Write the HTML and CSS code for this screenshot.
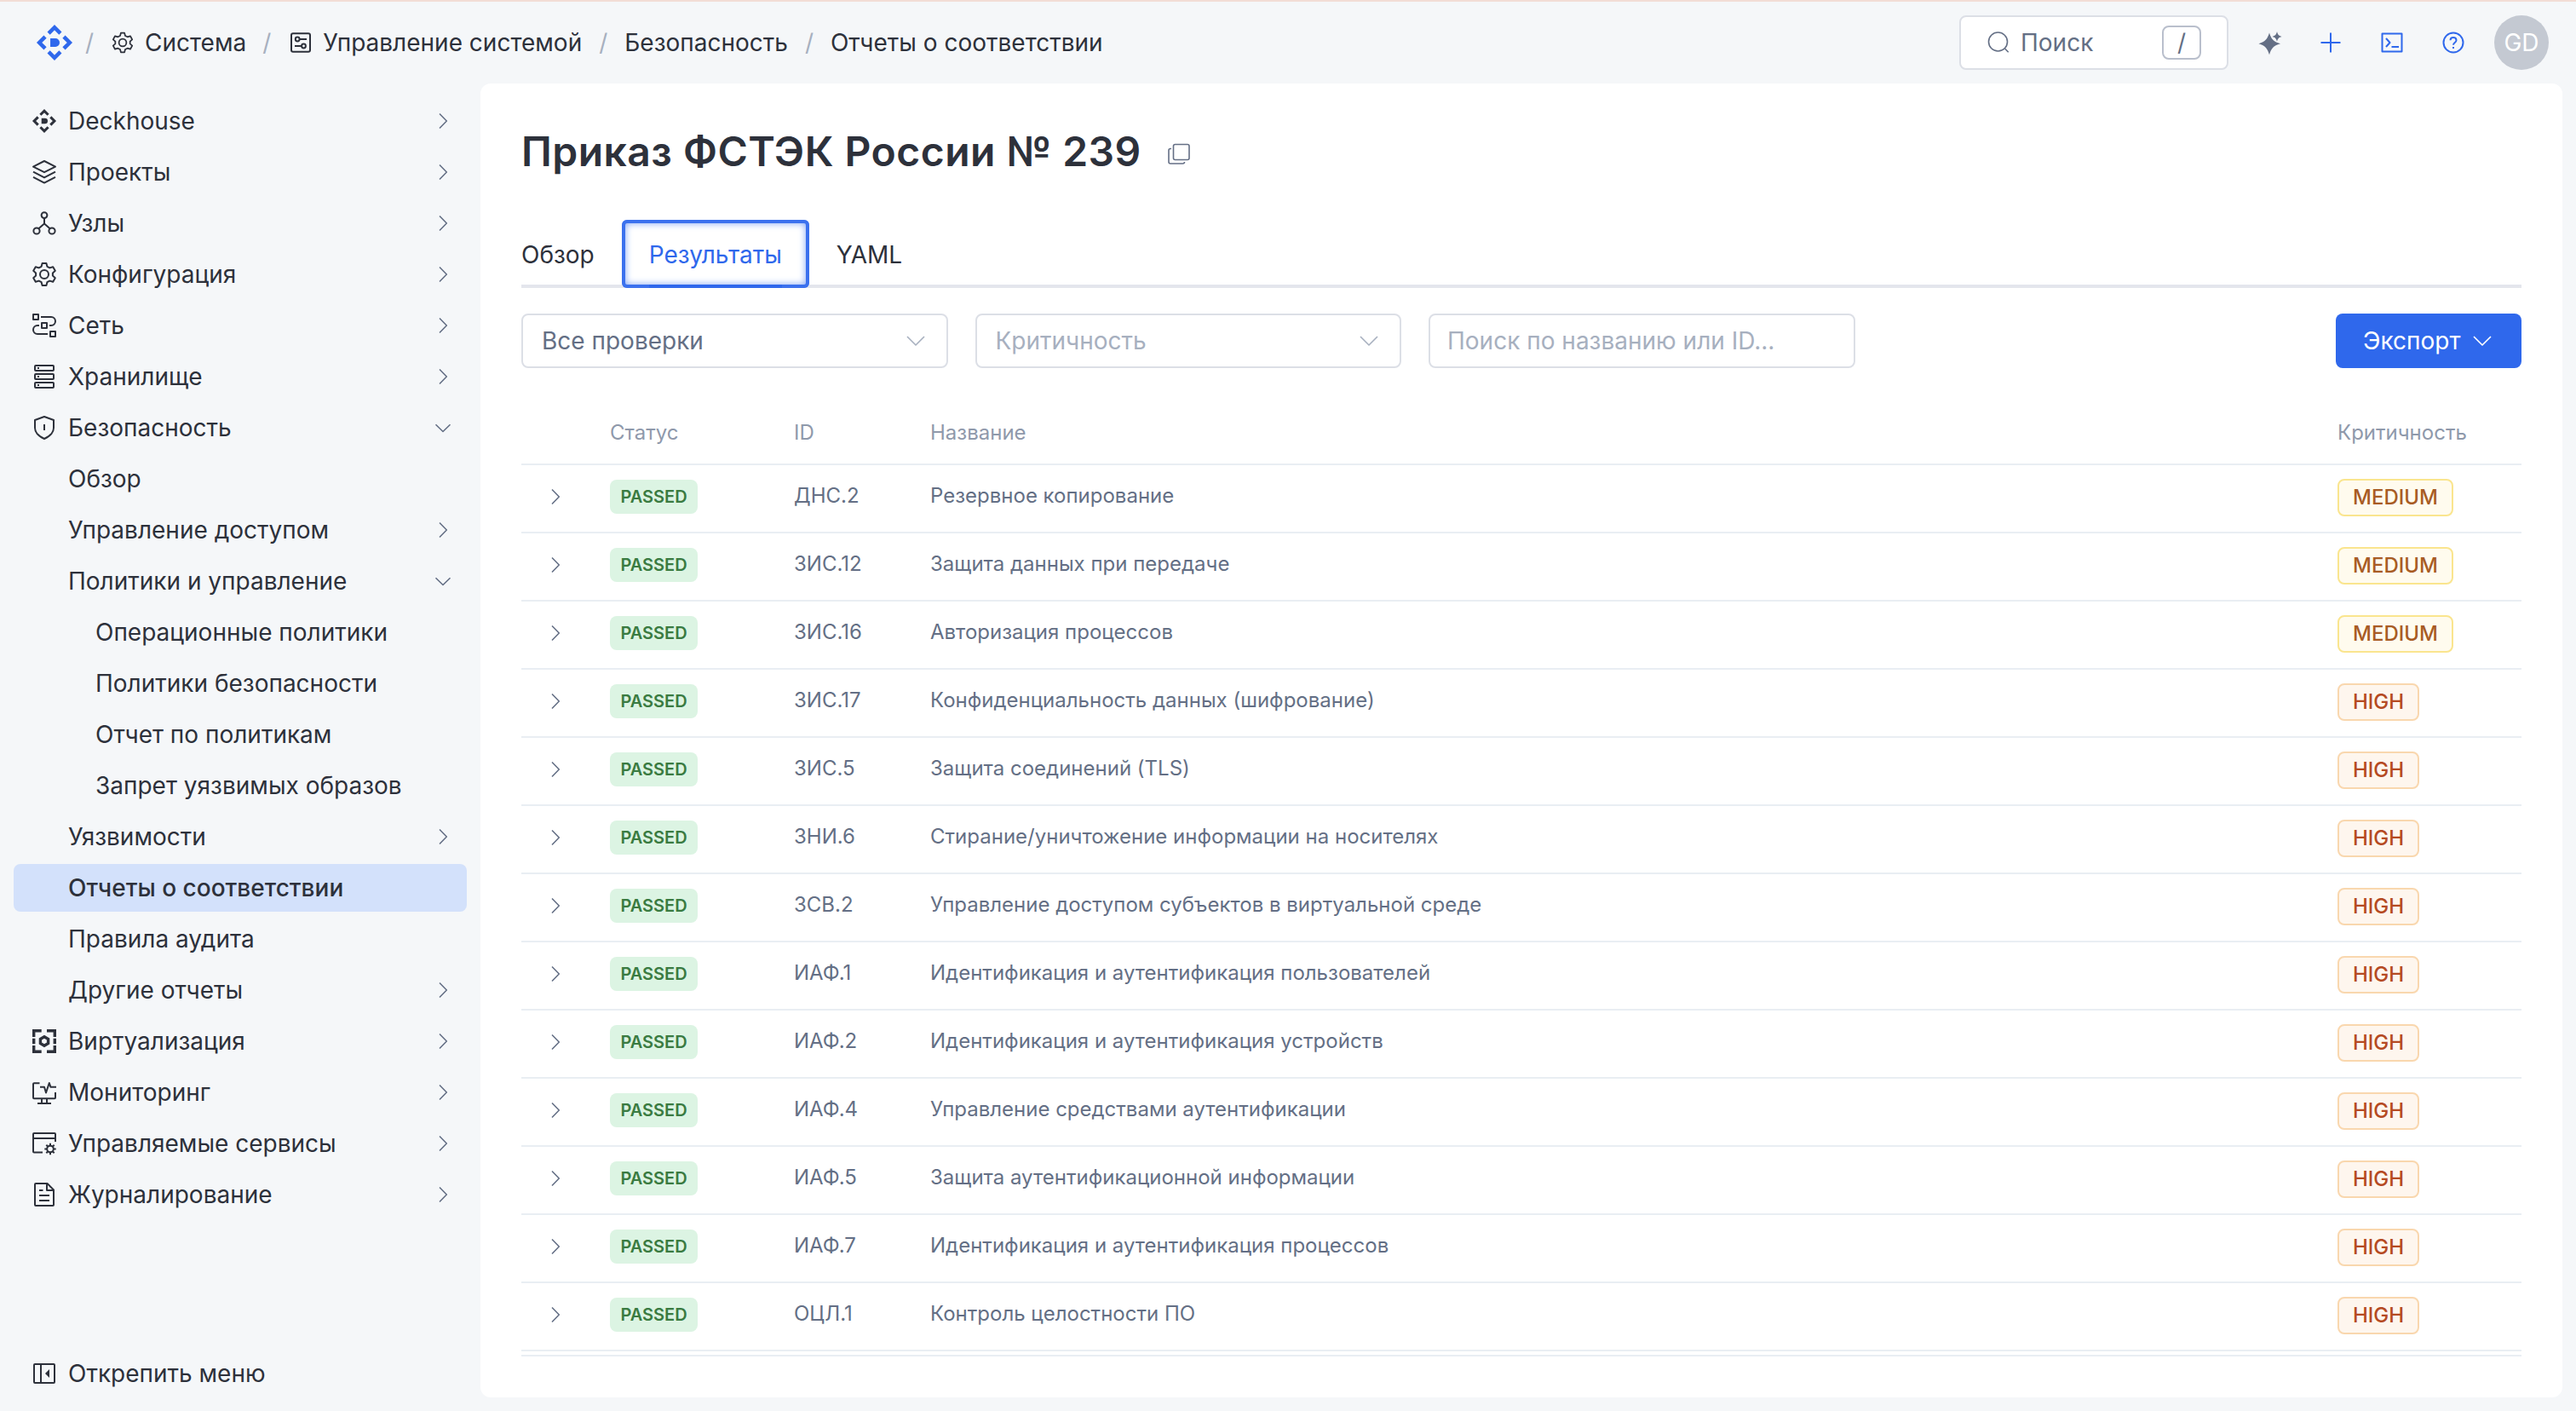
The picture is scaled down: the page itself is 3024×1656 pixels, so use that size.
FILE: index.html
```
<!DOCTYPE html>
<html lang="ru">
  <head>
    <meta charset="UTF-8" />
    <title>Приказ ФСТЭК России № 239</title>
    <link rel="stylesheet" href="styles.css">
  </head>
  <body>
    <svg class="sprite">
      <symbol id="i-deckhouse" viewBox="0 0 32 32">
        <g fill="none" stroke="currentColor" stroke-width="3" stroke-linejoin="miter">
          <path d="M11.4 8.7 16 4.1l4.600 4.600M11.400 23.300l4.600 4.600 4.600-4.600M8.700 11.400 4.100 16l4.600 4.600M23.300 11.400l4.600 4.600-4.600 4.600" />
        </g>
        <path fill="currentColor" stroke="none" d="M12.700 12.700h4a3.300 3.300 0 0 1 0 6.600h-4z" />
      </symbol>
      <symbol id="i-layers" viewBox="0 0 32 32">
        <path d="M16 3l13 6.600-13 6.600L3 9.600zM3 15.600l13 6.800 13-6.800M3 21.800l13 6.800 13-6.800" />
      </symbol>
      <symbol id="i-nodes" viewBox="0 0 32 32">
        <circle cx="16" cy="6.600" r="3.400" /><circle cx="7" cy="25" r="3.600" /><circle cx="25" cy="25" r="3.600" />
        <path d="M16 10v6.500L9.400 22.300M16 16.500l6.600 5.800" />
      </symbol>
      <symbol id="i-gear" viewBox="0 0 32 32">
        <path d="M13.600 3h4.800l1 3.800 3 1.600 3.800-1.200 2.600 4.600-2.900 2.600v3.200l2.900 2.600-2.600 4.600-3.800-1.200-3 1.600-1 3.800h-4.800l-1-3.800-3-1.600-3.800 1.200-2.600-4.600 2.900-2.600v-3.200l-2.900-2.600 2.600-4.600 3.800 1.200 3-1.600z" />
        <circle cx="16" cy="16" r="5" />
      </symbol>
      <symbol id="i-network" viewBox="0 0 32 32">
        <path d="M3 3h6v6H3zM13 13h6v6h-6zM23 23h6v6h-6zM12 6h12a5 5 0 0 1 0 10h-2M20 26H8a5 5 0 0 1 0-10h2" />
      </symbol>
      <symbol id="i-storage" viewBox="0 0 32 32">
        <rect x="5" y="3" width="22" height="6" rx="1" /><rect x="5" y="13" width="22" height="6" rx="1" /><rect x="5" y="23" width="22" height="6" rx="1" />
        <path d="M8 6h2M8 16h2M8 26h2" />
      </symbol>
      <symbol id="i-shield" viewBox="0 0 32 32">
        <path d="M16 3l11 4v9c0 6.500-5.500 10.500-11 13-5.500-2.500-11-6.500-11-13V7zM16 12v7" />
      </symbol>
      <symbol id="i-virt" viewBox="0 0 32 32">
        <g stroke-width="3.400" stroke-linejoin="miter"><path d="M3.700 11V3.700h9M19 3.700h9.300V11M28.300 21v7.300H19M12.700 28.300h-9V21M3.700 12.800v6.400M28.300 12.800v6.400" />
        <path d="M16 10.800l4.600 2.600v5.200L16 21.200l-4.600-2.600v-5.200z" /></g>
      </symbol>
      <symbol id="i-monitor" viewBox="0 0 32 32">
        <path d="M10.500 5.300H4a1 1 0 0 0-1 1v15.900a1 1 0 0 0 1 1h24a1 1 0 0 0 1-1V16M11 9.800h5l2 6.700 3.800-11.500 1.700 4.800H30M13 23v6M19 23v6M8 29h16" />
      </symbol>
      <symbol id="i-service" viewBox="0 0 32 32">
        <path d="M29 14V5a1 1 0 0 0-1-1H4a1 1 0 0 0-1 1v20.500a1 1 0 0 0 1 1h10M3 10h26" />
        <circle cx="23" cy="22.500" r="3.800" />
        <path d="M23 15.800v3M23 26.200v3M16.300 22.500h3M26.700 22.500h3M18.300 17.800l2 2M25.700 25.200l2 2M18.300 27.200l2-2M25.700 19.800l2-2" />
      </symbol>
      <symbol id="i-log" viewBox="0 0 32 32">
        <path d="M19.500 3H6a1 1 0 0 0-1 1v24a1 1 0 0 0 1 1h20a1 1 0 0 0 1-1V10.500zM19 3v8h8M10 11h4.500M10 17h12M10 23h12" />
      </symbol>
      <symbol id="i-unpin" viewBox="0 0 32 32">
        <rect x="4" y="5" width="24" height="22" rx="1" /><path d="M12 5v22" />
        <path class="solid" d="M22 11v10l-5-5z" />
      </symbol>
      <symbol id="i-control" viewBox="0 0 32 32">
        <rect x="5" y="5.300" width="22" height="21.400" rx="2" /><circle cx="12.200" cy="12" r="2.400" /><circle cx="19.500" cy="20" r="2.400" />
        <path d="M14.600 12H23M9 20h8" />
      </symbol>
      <symbol id="i-right" viewBox="0 0 32 32"><path d="M12 7.500l8.300 8.500-8.300 8.500" /></symbol>
      <symbol id="i-down" viewBox="0 0 32 32"><path d="M6 11l10 10 10-10" /></symbol>
      <symbol id="i-fold" viewBox="0 0 32 32"><path d="M7.500 12.200l8.500 8.300 8.500-8.300" /></symbol>
    </svg>

    <header class="header">
      <nav class="crumbs">
        <svg class="logo"><use href="#i-deckhouse" /></svg>
        <span class="slash first">/</span>
        <a class="crumb system"><svg class="icon small"><use href="#i-gear" /></svg>Система</a>
        <span class="slash second">/</span>
        <a class="crumb"><svg class="icon"><use href="#i-control" /></svg>Управление системой</a>
        <span class="slash">/</span>
        <a class="crumb">Безопасность</a>
        <span class="slash">/</span>
        <a class="crumb">Отчеты о соответствии</a>
      </nav>
      <div class="tools">
        <div class="search">
          <svg class="icon thin" viewBox="0 0 32 32"><circle cx="15.500" cy="15" r="11" /><path d="M23.500 23l4.200 4.200" /></svg>
          <span>Поиск</span>
          <kbd>/</kbd>
        </div>
        <svg class="icon tool sparkle" viewBox="0 0 32 32">
          <path class="solid" d="M16 4.500c2.200 6.800 4.400 10.500 13 12.800-8.600 2.300-10.800 6-13 12.900-2.200-6.900-4.400-10.600-12.500-12.900 8.100-2.300 10.300-6 12.500-12.800z" />
          <path class="solid cut" d="M25 3c.9 3.500 2 4.900 5.500 5.900-3.500 1-4.600 2.300-5.500 5.800-.9-3.500-2-4.800-5.500-5.800 3.500-1 4.600-2.400 5.500-5.900z" />
        </svg>
        <svg class="icon tool" viewBox="0 0 32 32"><path d="M16 4.500v23M4.500 16h23" /></svg>
        <svg class="icon tool" viewBox="0 0 32 32"><path d="M4.500 5.500h23v21h-23zM9 11l4.500 5L9 21M15.500 21H24" /></svg>
        <svg class="icon tool" viewBox="0 0 32 32">
          <circle cx="16" cy="16" r="11.500" /><path d="M12.500 13.300c0-4.500 7-4.500 7 0 0 2.700-3.500 2.700-3.500 5.400M16 21v2" />
        </svg>
        <div class="avatar">GD</div>
      </div>
    </header>

    <div class="layout">
      <aside class="sidebar">
        <ul class="menu">
          <li><svg class="icon"><use href="#i-deckhouse" /></svg>Deckhouse<svg class="icon arrow"><use href="#i-right" /></svg></li>
          <li><svg class="icon"><use href="#i-layers" /></svg>Проекты<svg class="icon arrow"><use href="#i-right" /></svg></li>
          <li><svg class="icon"><use href="#i-nodes" /></svg>Узлы<svg class="icon arrow"><use href="#i-right" /></svg></li>
          <li><svg class="icon"><use href="#i-gear" /></svg>Конфигурация<svg class="icon arrow"><use href="#i-right" /></svg></li>
          <li><svg class="icon"><use href="#i-network" /></svg>Сеть<svg class="icon arrow"><use href="#i-right" /></svg></li>
          <li><svg class="icon"><use href="#i-storage" /></svg>Хранилище<svg class="icon arrow"><use href="#i-right" /></svg></li>
          <li><svg class="icon"><use href="#i-shield" /></svg>Безопасность<svg class="icon arrow"><use href="#i-fold" /></svg></li>
          <li class="sub">Обзор</li>
          <li class="sub">Управление доступом<svg class="icon arrow"><use href="#i-right" /></svg></li>
          <li class="sub">Политики и управление<svg class="icon arrow"><use href="#i-fold" /></svg></li>
          <li class="sub2">Операционные политики</li>
          <li class="sub2">Политики безопасности</li>
          <li class="sub2">Отчет по политикам</li>
          <li class="sub2">Запрет уязвимых образов</li>
          <li class="sub">Уязвимости<svg class="icon arrow"><use href="#i-right" /></svg></li>
          <li class="sub active">Отчеты о соответствии</li>
          <li class="sub">Правила аудита</li>
          <li class="sub">Другие отчеты<svg class="icon arrow"><use href="#i-right" /></svg></li>
          <li><svg class="icon"><use href="#i-virt" /></svg>Виртуализация<svg class="icon arrow"><use href="#i-right" /></svg></li>
          <li><svg class="icon"><use href="#i-monitor" /></svg>Мониторинг<svg class="icon arrow"><use href="#i-right" /></svg></li>
          <li><svg class="icon"><use href="#i-service" /></svg>Управляемые сервисы<svg class="icon arrow"><use href="#i-right" /></svg></li>
          <li><svg class="icon"><use href="#i-log" /></svg>Журналирование<svg class="icon arrow"><use href="#i-right" /></svg></li>
        </ul>
        <ul class="menu">
          <li><svg class="icon"><use href="#i-unpin" /></svg>Открепить меню</li>
        </ul>
      </aside>

      <main class="panel">
        <div class="title">
          <h1>Приказ ФСТЭК России № 239</h1>
          <svg class="icon thin copy" viewBox="0 0 32 32"><rect x="9.500" y="4.500" width="18.500" height="18" rx="2" /><path d="M7 9.500H6a2 2 0 0 0-2 2V25a2 2 0 0 0 2 2h14.500a2 2 0 0 0 2-2" /></svg>
        </div>

        <div class="tabs">
          <div class="tab">Обзор</div>
          <div class="tab current"><span>Результаты</span></div>
          <div class="tab">YAML</div>
        </div>

        <div class="filters">
          <div class="field filled">Все проверки<svg class="icon"><use href="#i-down" /></svg></div>
          <div class="field">Критичность<svg class="icon"><use href="#i-down" /></svg></div>
          <div class="field input">Поиск по названию или ID...</div>
          <div class="export">Экспорт<svg class="icon"><use href="#i-down" /></svg></div>
        </div>

        <table class="checks">
          <thead>
            <tr><th class="c-open"></th><th class="c-status">Статус</th><th class="c-id">ID</th><th>Название</th><th class="c-level">Критичность</th></tr>
          </thead>
          <tbody>
            <tr><td><svg class="icon"><use href="#i-right" /></svg></td><td><span class="passed">PASSED</span></td><td>ДНС.2</td><td>Резервное копирование</td><td><span class="level medium">MEDIUM</span></td></tr>
            <tr><td><svg class="icon"><use href="#i-right" /></svg></td><td><span class="passed">PASSED</span></td><td>ЗИС.12</td><td>Защита данных при передаче</td><td><span class="level medium">MEDIUM</span></td></tr>
            <tr><td><svg class="icon"><use href="#i-right" /></svg></td><td><span class="passed">PASSED</span></td><td>ЗИС.16</td><td>Авторизация процессов</td><td><span class="level medium">MEDIUM</span></td></tr>
            <tr><td><svg class="icon"><use href="#i-right" /></svg></td><td><span class="passed">PASSED</span></td><td>ЗИС.17</td><td>Конфиденциальность данных (шифрование)</td><td><span class="level high">HIGH</span></td></tr>
            <tr><td><svg class="icon"><use href="#i-right" /></svg></td><td><span class="passed">PASSED</span></td><td>ЗИС.5</td><td>Защита соединений (TLS)</td><td><span class="level high">HIGH</span></td></tr>
            <tr><td><svg class="icon"><use href="#i-right" /></svg></td><td><span class="passed">PASSED</span></td><td>ЗНИ.6</td><td>Стирание/уничтожение информации на носителях</td><td><span class="level high">HIGH</span></td></tr>
            <tr><td><svg class="icon"><use href="#i-right" /></svg></td><td><span class="passed">PASSED</span></td><td>ЗСВ.2</td><td>Управление доступом субъектов в виртуальной среде</td><td><span class="level high">HIGH</span></td></tr>
            <tr><td><svg class="icon"><use href="#i-right" /></svg></td><td><span class="passed">PASSED</span></td><td>ИАФ.1</td><td>Идентификация и аутентификация пользователей</td><td><span class="level high">HIGH</span></td></tr>
            <tr><td><svg class="icon"><use href="#i-right" /></svg></td><td><span class="passed">PASSED</span></td><td>ИАФ.2</td><td>Идентификация и аутентификация устройств</td><td><span class="level high">HIGH</span></td></tr>
            <tr><td><svg class="icon"><use href="#i-right" /></svg></td><td><span class="passed">PASSED</span></td><td>ИАФ.4</td><td>Управление средствами аутентификации</td><td><span class="level high">HIGH</span></td></tr>
            <tr><td><svg class="icon"><use href="#i-right" /></svg></td><td><span class="passed">PASSED</span></td><td>ИАФ.5</td><td>Защита аутентификационной информации</td><td><span class="level high">HIGH</span></td></tr>
            <tr><td><svg class="icon"><use href="#i-right" /></svg></td><td><span class="passed">PASSED</span></td><td>ИАФ.7</td><td>Идентификация и аутентификация процессов</td><td><span class="level high">HIGH</span></td></tr>
            <tr><td><svg class="icon"><use href="#i-right" /></svg></td><td><span class="passed">PASSED</span></td><td>ОЦЛ.1</td><td>Контроль целостности ПО</td><td><span class="level high">HIGH</span></td></tr>
          </tbody>
        </table>
        <div class="table-end"></div>
      </main>
    </div>
  </body>
</html>
```

FILE: styles.css
```
* {
  box-sizing: border-box;
}
body {
  margin: 0;
  height: 1656px;
  display: flex;
  flex-direction: column;
  border-top: 2px solid #f2ddd5;
  background: #f5f7f9;
  color: #2d313b;
  font-family: Inter, "Noto Sans", sans-serif;
  font-size: 28px;
  line-height: 44px;
}
.sprite {
  display: none;
}
.icon {
  width: 32px;
  height: 32px;
  flex: none;
  fill: none;
  stroke: currentColor;
  stroke-width: 2;
  stroke-linejoin: round;
}
.solid {
  fill: currentColor;
  stroke: none;
}
.thin {
  stroke-width: 1.6;
}

/* header */
.header {
  height: 96px;
  flex: none;
  display: flex;
  align-items: center;
  justify-content: space-between;
  padding: 0 32px 0 40px;
}
.crumbs,
.crumb,
.tools {
  display: flex;
  align-items: center;
}
.logo {
  width: 48px;
  height: 48px;
  color: #2f68ec;
}
.crumb {
  gap: 10px;
}
.crumb.system {
  gap: 12px;
}
.small {
  width: 28px;
  height: 28px;
}
.slash {
  width: 10px;
  margin: 0 20px;
  color: #a7b0bf;
}
.slash.first {
  margin-left: 12px;
}
.slash.second {
  margin: 0 19px;
}
.search {
  width: 316px;
  height: 64px;
  display: flex;
  align-items: center;
  gap: 10px;
  padding: 0 30px 0 28px;
  margin-right: 32px;
  border: 2px solid #dcdfe6;
  border-radius: 8px;
  background: #fff;
  color: #646f85;
}
kbd {
  width: 46px;
  height: 40px;
  margin-left: auto;
  border: 2px solid #b9bfcc;
  border-radius: 8px;
  font-family: inherit;
  line-height: 36px;
  text-align: center;
}
.tool {
  margin-right: 40px;
  color: #2f68ec;
}
.sparkle {
  color: #646f85;
}
/* thin gap between the two stars */
.cut {
  stroke: #f5f7f9;
  stroke-width: 1.6;
  paint-order: stroke;
}
.tools .tool:nth-last-child(2) {
  margin-right: 32px;
}
.avatar {
  width: 64px;
  height: 64px;
  border-radius: 50%;
  background: #c4c9d2;
  color: #fff;
  line-height: 64px;
  text-align: center;
}

.layout {
  flex: 1;
  display: flex;
  padding: 0 16px 16px;
  gap: 16px;
}

/* sidebar */
.sidebar {
  width: 532px;
  flex: none;
  display: flex;
  flex-direction: column;
  justify-content: space-between;
  padding-top: 16px;
}
.menu {
  margin: 0;
  padding: 0;
  list-style: none;
  display: flex;
  flex-direction: column;
  gap: 4px;
}
.menu li {
  height: 56px;
  display: flex;
  align-items: center;
  gap: 12px;
  padding: 0 12px 0 20px;
  border-radius: 8px;
}
.menu .sub {
  padding-left: 64px;
}
.menu .sub2 {
  padding-left: 96px;
}
.menu .active {
  background: #d3e1fb;
  font-weight: 500;
}
.menu .arrow {
  margin-left: auto;
  stroke-width: 1.6;
  color: #646f85;
}

/* content */
.panel {
  flex: 1;
  padding: 48px;
  border-radius: 12px;
  background: #fff;
}
.title {
  height: 64px;
  display: flex;
  align-items: center;
  gap: 28px;
}
h1 {
  margin: 0;
  font-size: 48px;
  font-weight: 600;
  line-height: 64px;
  letter-spacing: 0.47px;
}
.copy {
  margin-top: 6px;
  color: #646f85;
}
.tabs {
  height: 80px;
  display: flex;
  margin-top: 48px;
  box-shadow: inset 0 -4px #e4e6ed;
}
.tab {
  padding-right: 32px;
  line-height: 82px;
}
.tab.current {
  padding: 0 32px;
  margin-right: 32px;
  border-radius: 6px;
  box-shadow: inset 0 0 0 4px #3b71ee, inset 0 0 8px 4px #7ea2f4;
  color: #2f68ec;
}
.tab.current span {
  display: block;
  height: 80px;
  box-shadow: inset 0 -4px #2f68ec;
}
.filters {
  display: flex;
  gap: 32px;
  margin-top: 30px;
}
.field {
  width: 500.5px;
  height: 64px;
  display: flex;
  align-items: center;
  justify-content: space-between;
  padding: 0 20px 0 22px;
  border: 2px solid #dcdfe6;
  border-radius: 8px;
  color: #a7b0bf;
}
.field .icon,
.export .icon {
  stroke-width: 1.6;
}
.field .icon {
  color: #a7b0bf;
}
.filled {
  color: #646f85;
}
.input {
  padding-left: 20px;
}
.export {
  width: 218px;
  height: 64px;
  display: flex;
  align-items: center;
  gap: 10px;
  margin-left: auto;
  padding-left: 32px;
  border-radius: 8px;
  background: #2f68ec;
  color: #fff;
}

/* table */
.checks {
  width: 100%;
  margin-top: 32px;
  border-collapse: separate;
  border-spacing: 0;
  table-layout: fixed;
  font-size: 24px;
  line-height: 40px;
}
.checks th,
.checks td {
  height: 80px;
  padding: 0 0 6px;
  border-bottom: 2px solid #e9eef3;
  text-align: left;
  font-weight: 400;
}
.checks th {
  height: 82px;
  padding: 8px 0 0;
  color: #8f99ab;
}
.checks td {
  color: #646f85;
}
.checks .icon {
  display: block;
  margin: 2px 0 0 24px;
  stroke-width: 1.6;
}
.c-open {
  width: 104px;
}
.c-status {
  width: 216px;
}
.c-id {
  width: 160px;
}
.c-level {
  width: 216px;
}
.passed {
  display: block;
  width: 103px;
  height: 40px;
  margin-top: 2px;
  border-radius: 8px;
  background: #dcf4e3;
  color: #3a7b41;
  font-size: 20px;
  font-weight: 600;
  text-align: center;
}
.level {
  display: block;
  width: 96px;
  height: 44px;
  margin-top: 4px;
  border: 2px solid #f9d7ae;
  border-radius: 8px;
  background: #fef6ee;
  color: #b54a22;
  font-weight: 500;
  text-align: center;
}
.medium {
  width: 136px;
  border-color: #fae58e;
  background: #fffbee;
  color: #a85c24;
}
.table-end {
  margin-top: 4px;
  border-top: 2px solid #e9eef3;
}
```
